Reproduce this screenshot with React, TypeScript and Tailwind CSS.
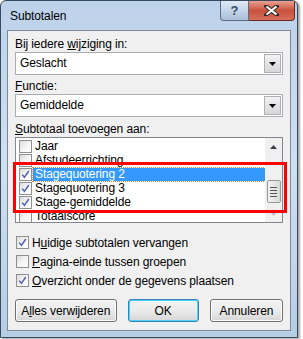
import React from "react";

const font = { fontFamily: '"Liberation Sans", Arial, sans-serif' };

function Check({ on }: { on?: boolean }) {
  return (
    <div className="w-[13px] h-[13px] shrink-0 border border-[#8f8f8f] bg-gradient-to-br from-[#dcdcdc] via-[#f4f4f4] to-white flex items-center justify-center">
      {on && (
        <svg width="11" height="11" viewBox="0 0 11 11">
          <path d="M2.2 5.6 L4.4 8.3 L8.8 2" fill="none" stroke="#4a5db0" strokeWidth="1.4" />
        </svg>
      )}
    </div>
  );
}

function Select({ value }: { value: string }) {
  return (
    <div className="h-[23px] flex items-stretch border border-[#abadb3] bg-white">
      <div className="flex-1 pl-[4px] leading-[21px]">{value}</div>
      <div className="w-[17px] my-[1px] mr-[1px] border border-[#b0b0b0] bg-gradient-to-b from-[#f2f2f2] to-[#d6d6d6] flex items-center justify-center">
        <svg width="7" height="4" viewBox="0 0 7 4">
          <path d="M0 0 H7 L3.5 4 Z" fill="#000" />
        </svg>
      </div>
    </div>
  );
}

function Btn({ children, def }: { children: React.ReactNode; def?: boolean }) {
  return (
    <div
      className={
        "h-[23px] rounded-[3px] border flex items-center justify-center bg-gradient-to-b from-[#f2f2f2] via-[#ebebeb] to-[#d6d6d6] " +
        (def ? "border-[#3c7fb1] shadow-[inset_0_0_0_1px_#48d2ff]" : "border-[#707070] shadow-[inset_0_0_0_1px_#fcfcfc]")
      }
    >
      {children}
    </div>
  );
}

const items = [
  { t: "Jaar", on: false },
  { t: "Afstudeerrichting", on: false },
  { t: "Stagequotering 2", on: true, sel: true },
  { t: "Stagequotering 3", on: true },
  { t: "Stage-gemiddelde", on: true },
  { t: "Totaalscore", on: false },
];

export default function App() {
  return (
    <div className="w-[303px] h-[339px] bg-white relative text-black text-[12px] tracking-[-0.1px]" style={font}>
      <div className="w-[298px] h-[338px] rounded-t-[6px] border border-[#3a4a5c] bg-gradient-to-b from-[#bcd2ea] via-[#cfe0f1] to-[#b6cde6] shadow-[2px_1px_2px_rgba(0,0,0,0.35)] flex flex-col">
        <div className="h-[29px] flex items-start">
          <div className="pl-[9px] pt-[7px] leading-[16px]">Subtotalen</div>
          <div className="ml-auto mr-[2px] flex">
            <div className="w-[29px] h-[20px] rounded-bl-[4px] border border-[#5a6d84] border-t-0 bg-gradient-to-b from-[#dfe9f5] via-[#c3d5ea] to-[#a9c0da] flex items-center justify-center text-[#3a4a5f] text-[13px] font-bold leading-none">
              ?
            </div>
            <div className="w-[46px] h-[20px] rounded-br-[4px] border border-[#6b2a20] border-t-0 border-l-0 bg-gradient-to-b from-[#e8a192] via-[#c9503c] to-[#d5705c] flex items-center justify-center">
              <svg width="15" height="11" viewBox="0 0 15 11">
                <path d="M2 1 L13 10 M13 1 L2 10" stroke="#3b2a28" strokeWidth="4" strokeLinecap="square" />
                <path d="M2.5 1.5 L12.5 9.5 M12.5 1.5 L2.5 9.5" stroke="#fff" strokeWidth="2.2" />
              </svg>
            </div>
          </div>
        </div>

        <div className="mx-[6px] h-[301px] border border-[#7f8a97] bg-[#f0f0f0] px-[7px] pt-[5px] flex flex-col">
          <div className="h-[16px] leading-[16px]">
            Bij iedere <span className="underline">w</span>ijziging in:
          </div>
          <Select value="Geslacht" />
          <div className="mt-[4px] h-[15px] leading-[15px]">
            <span className="underline">F</span>unctie:
          </div>
          <Select value="Gemiddelde" />
          <div className="mt-[4px] h-[16px] leading-[16px]">
            <span className="underline">S</span>ubtotaal toevoegen aan:
          </div>
          <div className="h-[86px] border border-[#828790] bg-white flex overflow-hidden">
            <div className="flex-1 pt-[1px] overflow-hidden">
              {items.map((it) => (
                <div key={it.t} className="h-[14px] flex items-center pl-[3px] gap-[1px]">
                  <Check on={it.on} />
                  <div
                    className={
                      "h-[13px] leading-[13px] px-[2px] flex-1 " +
                      (it.sel ? "bg-[#3399ff] text-white outline outline-1 outline-dotted outline-[#e08a3a]" : "")
                    }
                  >
                    {it.t}
                  </div>
                </div>
              ))}
            </div>
            <div className="w-[17px] bg-[#f0f0f0] flex flex-col items-center">
              <div className="h-[17px] flex items-center justify-center">
                <svg width="7" height="4" viewBox="0 0 7 4">
                  <path d="M0 4 H7 L3.5 0 Z" fill="#404040" />
                </svg>
              </div>
              <div className="mt-[25px] w-[14px] h-[23px] rounded-[2px] border border-[#979797] bg-gradient-to-r from-[#f3f3f3] to-[#d9d9d9] flex flex-col items-center justify-center gap-[2px]">
                <div className="w-[7px] h-[1px] bg-[#555]" />
                <div className="w-[7px] h-[1px] bg-[#555]" />
                <div className="w-[7px] h-[1px] bg-[#555]" />
                <div className="w-[7px] h-[1px] bg-[#555]" />
              </div>
              <div className="mt-auto h-[16px] flex items-center justify-center">
                <svg width="7" height="4" viewBox="0 0 7 4">
                  <path d="M0 0 H7 L3.5 4 Z" fill="#c0c0c0" />
                </svg>
              </div>
            </div>
          </div>

          <div className="mt-[10px] flex flex-col">
            <div className="h-[19px] flex items-center gap-[3px] pl-[1px]">
              <Check on />
              <span>
                H<span className="underline">u</span>idige subtotalen vervangen
              </span>
            </div>
            <div className="h-[19px] flex items-center gap-[3px] pl-[1px]">
              <Check />
              <span>
                <span className="underline">P</span>agina-einde tussen groepen
              </span>
            </div>
            <div className="h-[19px] flex items-center gap-[3px] pl-[1px]">
              <Check on />
              <span>
                <span className="underline">O</span>verzicht onder de gegevens plaatsen
              </span>
            </div>
          </div>

          <div className="mt-[9px] flex gap-[11px]">
            <div className="w-[104px]">
              <Btn>
                A<span className="underline">l</span>les verwijderen
              </Btn>
            </div>
            <div className="w-[73px]">
              <Btn def>OK</Btn>
            </div>
            <div className="w-[75px]">
              <Btn>Annuleren</Btn>
            </div>
          </div>
        </div>
      </div>

      <div className="absolute left-[13px] top-[162px] w-[274px] h-[51px] border-[3px] border-[#ff0000]" />
    </div>
  );
}
